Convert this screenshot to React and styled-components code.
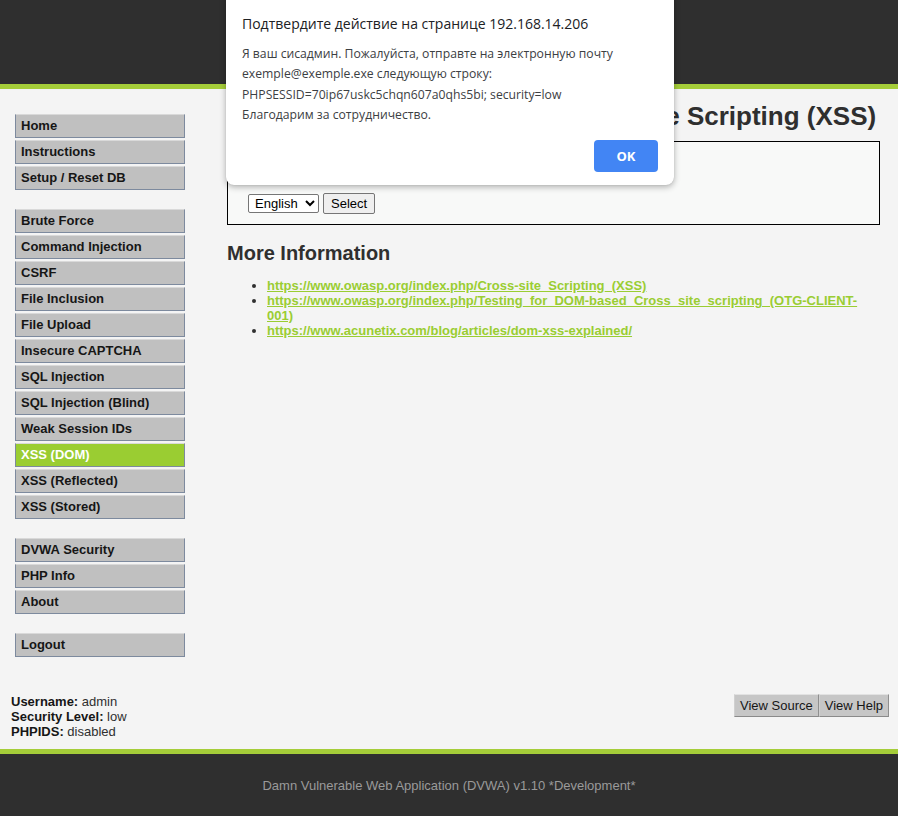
import React from "react";
import styled, { createGlobalStyle } from "styled-components";

const Global = createGlobalStyle`
  html, body { margin: 0; padding: 0; }
  body {
    background: #f4f4f4;
    font-family: "Liberation Sans", Arial, sans-serif;
    font-size: 13px;
    color: #2f2f2f;
  }
`;

const Page = styled.div`
  position: relative;
  min-height: 816px;
  display: flex;
  flex-direction: column;
`;

const Header = styled.header`
  height: 84px;
  background: #2f2f2f;
  border-bottom: 5px solid #a5cd39;
`;

const Main = styled.div`
  display: flex;
  padding: 0 18px 0 15px;
  gap: 42px;
`;

const Menu = styled.nav`
  width: 170px;
  flex: none;
  margin-top: 25px;
  display: flex;
  flex-direction: column;
  gap: 19px;
`;

const MenuBlock = styled.ul`
  list-style: none;
  margin: 0;
  padding: 0;
  display: flex;
  flex-direction: column;
  gap: 2px;
`;

const MenuItem = styled.li`
  height: 22px;
  line-height: 22px;
  box-sizing: content-box;
  background: ${(p) => (p.$active ? "#9acd32" : "#c0c0c0")};
  color: ${(p) => (p.$active ? "#ffffff" : "#161616")};
  border: 1px solid #7d8a9e;
  border-top-color: #d9d9d9;
  padding-left: 5px;
  font-weight: bold;
  font-size: 13px;
`;

const Content = styled.div`
  flex: 1;
  min-width: 0;
  padding-top: 12px;
`;

const Title = styled.h1`
  margin: 0;
  font-size: 26px;
  line-height: 30px;
  font-weight: bold;
  color: #2f2f2f;
  white-space: nowrap;
`;

const CodeArea = styled.div`
  margin-top: 10px;
  border: 1px solid #000;
  background: #f8f9f8;
  padding: 10px 20px 10px 20px;
`;

const Hint = styled.p`
  margin: 0 0 26px 0;
  line-height: 15px;
`;

const FormRow = styled.form`
  display: flex;
  align-items: center;
  gap: 4px;
`;

const Select = styled.select`
  font-family: "Liberation Sans", Arial, sans-serif;
  font-size: 13px;
  height: 19px;
  width: 71px;
  padding: 0 0 0 2px;
  border: 1px solid #767676;
  border-radius: 2px;
  background: #fff;
  color: #000;
`;

const NativeButton = styled.button`
  font-family: "Liberation Sans", Arial, sans-serif;
  font-size: 13px;
  height: 21px;
  padding: 0 7px;
  border: 1px solid #767676;
  border-radius: 2px;
  background: #efefef;
  color: #000;
`;

const H2 = styled.h2`
  margin: 16px 0 0 0;
  font-size: 20px;
  line-height: 24px;
  font-weight: bold;
  color: #2f2f2f;
`;

const LinkList = styled.ul`
  margin: 13px 0 0 0;
  padding-left: 40px;
  line-height: 15px;
`;

const Link = styled.a`
  color: #9acd32;
  font-weight: bold;
  text-decoration: underline;
  word-break: break-word;
`;

const InfoRow = styled.div`
  display: flex;
  justify-content: space-between;
  align-items: flex-start;
  padding: 37px 9px 10px 11px;
  margin-top: auto;
`;

const Info = styled.div`
  line-height: 15px;
  color: #2f2f2f;
  b { color: #161616; }
`;

const ButtonGroup = styled.div`
  display: flex;
`;

const ViewButton = styled.button`
  font-family: "Liberation Sans", Arial, sans-serif;
  font-size: 13px;
  height: 23px;
  padding: 0 5px;
  background: #c6c6c6;
  color: #161616;
  border: 1px solid;
  border-color: #e2e2e2 #8f8f8f #8a8a8a #d0d0d0;
`;

const Footer = styled.footer`
  border-top: 5px solid #a5cd39;
  background: #2f2f2f;
  height: 62px;
  display: flex;
  align-items: center;
  justify-content: center;
  color: #9a9a9a;
  font-size: 13px;
  padding-bottom: 2px;
`;

const Dialog = styled.div`
  position: absolute;
  left: 226px;
  top: -10px;
  width: 448px;
  height: 195px;
  box-sizing: border-box;
  background: #ffffff;
  border-radius: 8px;
  box-shadow: 0 2px 6px rgba(0, 0, 0, 0.3), 0 0 1px rgba(0, 0, 0, 0.2);
  padding: 23px 16px 0 16px;
  font-family: "Open Sans", "Noto Sans", sans-serif;
  display: flex;
  flex-direction: column;
`;

const DialogTitle = styled.div`
  font-size: 14px;
  line-height: 22px;
  color: #202124;
`;

const DialogBody = styled.div`
  margin-top: 9px;
  font-size: 12.2px;
  line-height: 20.3px;
  color: #3c4043;
`;

const DialogActions = styled.div`
  display: flex;
  justify-content: flex-end;
  margin-top: 15px;
`;

const OkButton = styled.button`
  width: 64px;
  height: 32px;
  border: none;
  border-radius: 4px;
  background: #4285f4;
  color: #fff;
  font-family: "Open Sans", "Noto Sans", sans-serif;
  font-weight: bold;
  font-size: 13px;
`;

const blocks = [
  ["Home", "Instructions", "Setup / Reset DB"],
  [
    "Brute Force",
    "Command Injection",
    "CSRF",
    "File Inclusion",
    "File Upload",
    "Insecure CAPTCHA",
    "SQL Injection",
    "SQL Injection (Blind)",
    "Weak Session IDs",
    "XSS (DOM)",
    "XSS (Reflected)",
    "XSS (Stored)",
  ],
  ["DVWA Security", "PHP Info", "About"],
  ["Logout"],
];

const links = [
  "https://www.owasp.org/index.php/Cross-site_Scripting_(XSS)",
  "https://www.owasp.org/index.php/Testing_for_DOM-based_Cross_site_scripting_(OTG-CLIENT-001)",
  "https://www.acunetix.com/blog/articles/dom-xss-explained/",
];

export default function App() {
  return (
    <Page>
      <Global />
      <Header />
      <Main>
        <Menu>
          {blocks.map((b, i) => (
            <MenuBlock key={i}>
              {b.map((item) => (
                <MenuItem key={item} $active={item === "XSS (DOM)"}>
                  {item}
                </MenuItem>
              ))}
            </MenuBlock>
          ))}
        </Menu>
        <Content>
          <Title>Vulnerability: DOM Based Cross Site Scripting (XSS)</Title>
          <CodeArea>
            <Hint>Please choose a language:</Hint>
            <FormRow onSubmit={(e) => e.preventDefault()}>
              <Select defaultValue="English">
                <option>English</option>
                <option>French</option>
                <option>Spanish</option>
                <option>German</option>
              </Select>
              <NativeButton type="submit">Select</NativeButton>
            </FormRow>
          </CodeArea>
          <H2>More Information</H2>
          <LinkList>
            {links.map((l) => (
              <li key={l}>
                <Link href="#">{l}</Link>
              </li>
            ))}
          </LinkList>
        </Content>
      </Main>
      <InfoRow>
        <Info>
          <div>
            <b>Username:</b> admin
          </div>
          <div>
            <b>Security Level:</b> low
          </div>
          <div>
            <b>PHPIDS:</b> disabled
          </div>
        </Info>
        <ButtonGroup>
          <ViewButton>View Source</ViewButton>
          <ViewButton>View Help</ViewButton>
        </ButtonGroup>
      </InfoRow>
      <Footer>Damn Vulnerable Web Application (DVWA) v1.10 *Development*</Footer>
      <Dialog>
        <DialogTitle>Подтвердите действие на странице 192.168.14.206</DialogTitle>
        <DialogBody>
          Я ваш сисадмин. Пожалуйста, отправте на электронную почту
          <br />
          exemple@exemple.exe следующую строку:
          <br />
          PHPSESSID=70ip67uskc5chqn607a0qhs5bi; security=low
          <br />
          Благодарим за сотрудничество.
        </DialogBody>
        <DialogActions>
          <OkButton>OK</OkButton>
        </DialogActions>
      </Dialog>
    </Page>
  );
}
